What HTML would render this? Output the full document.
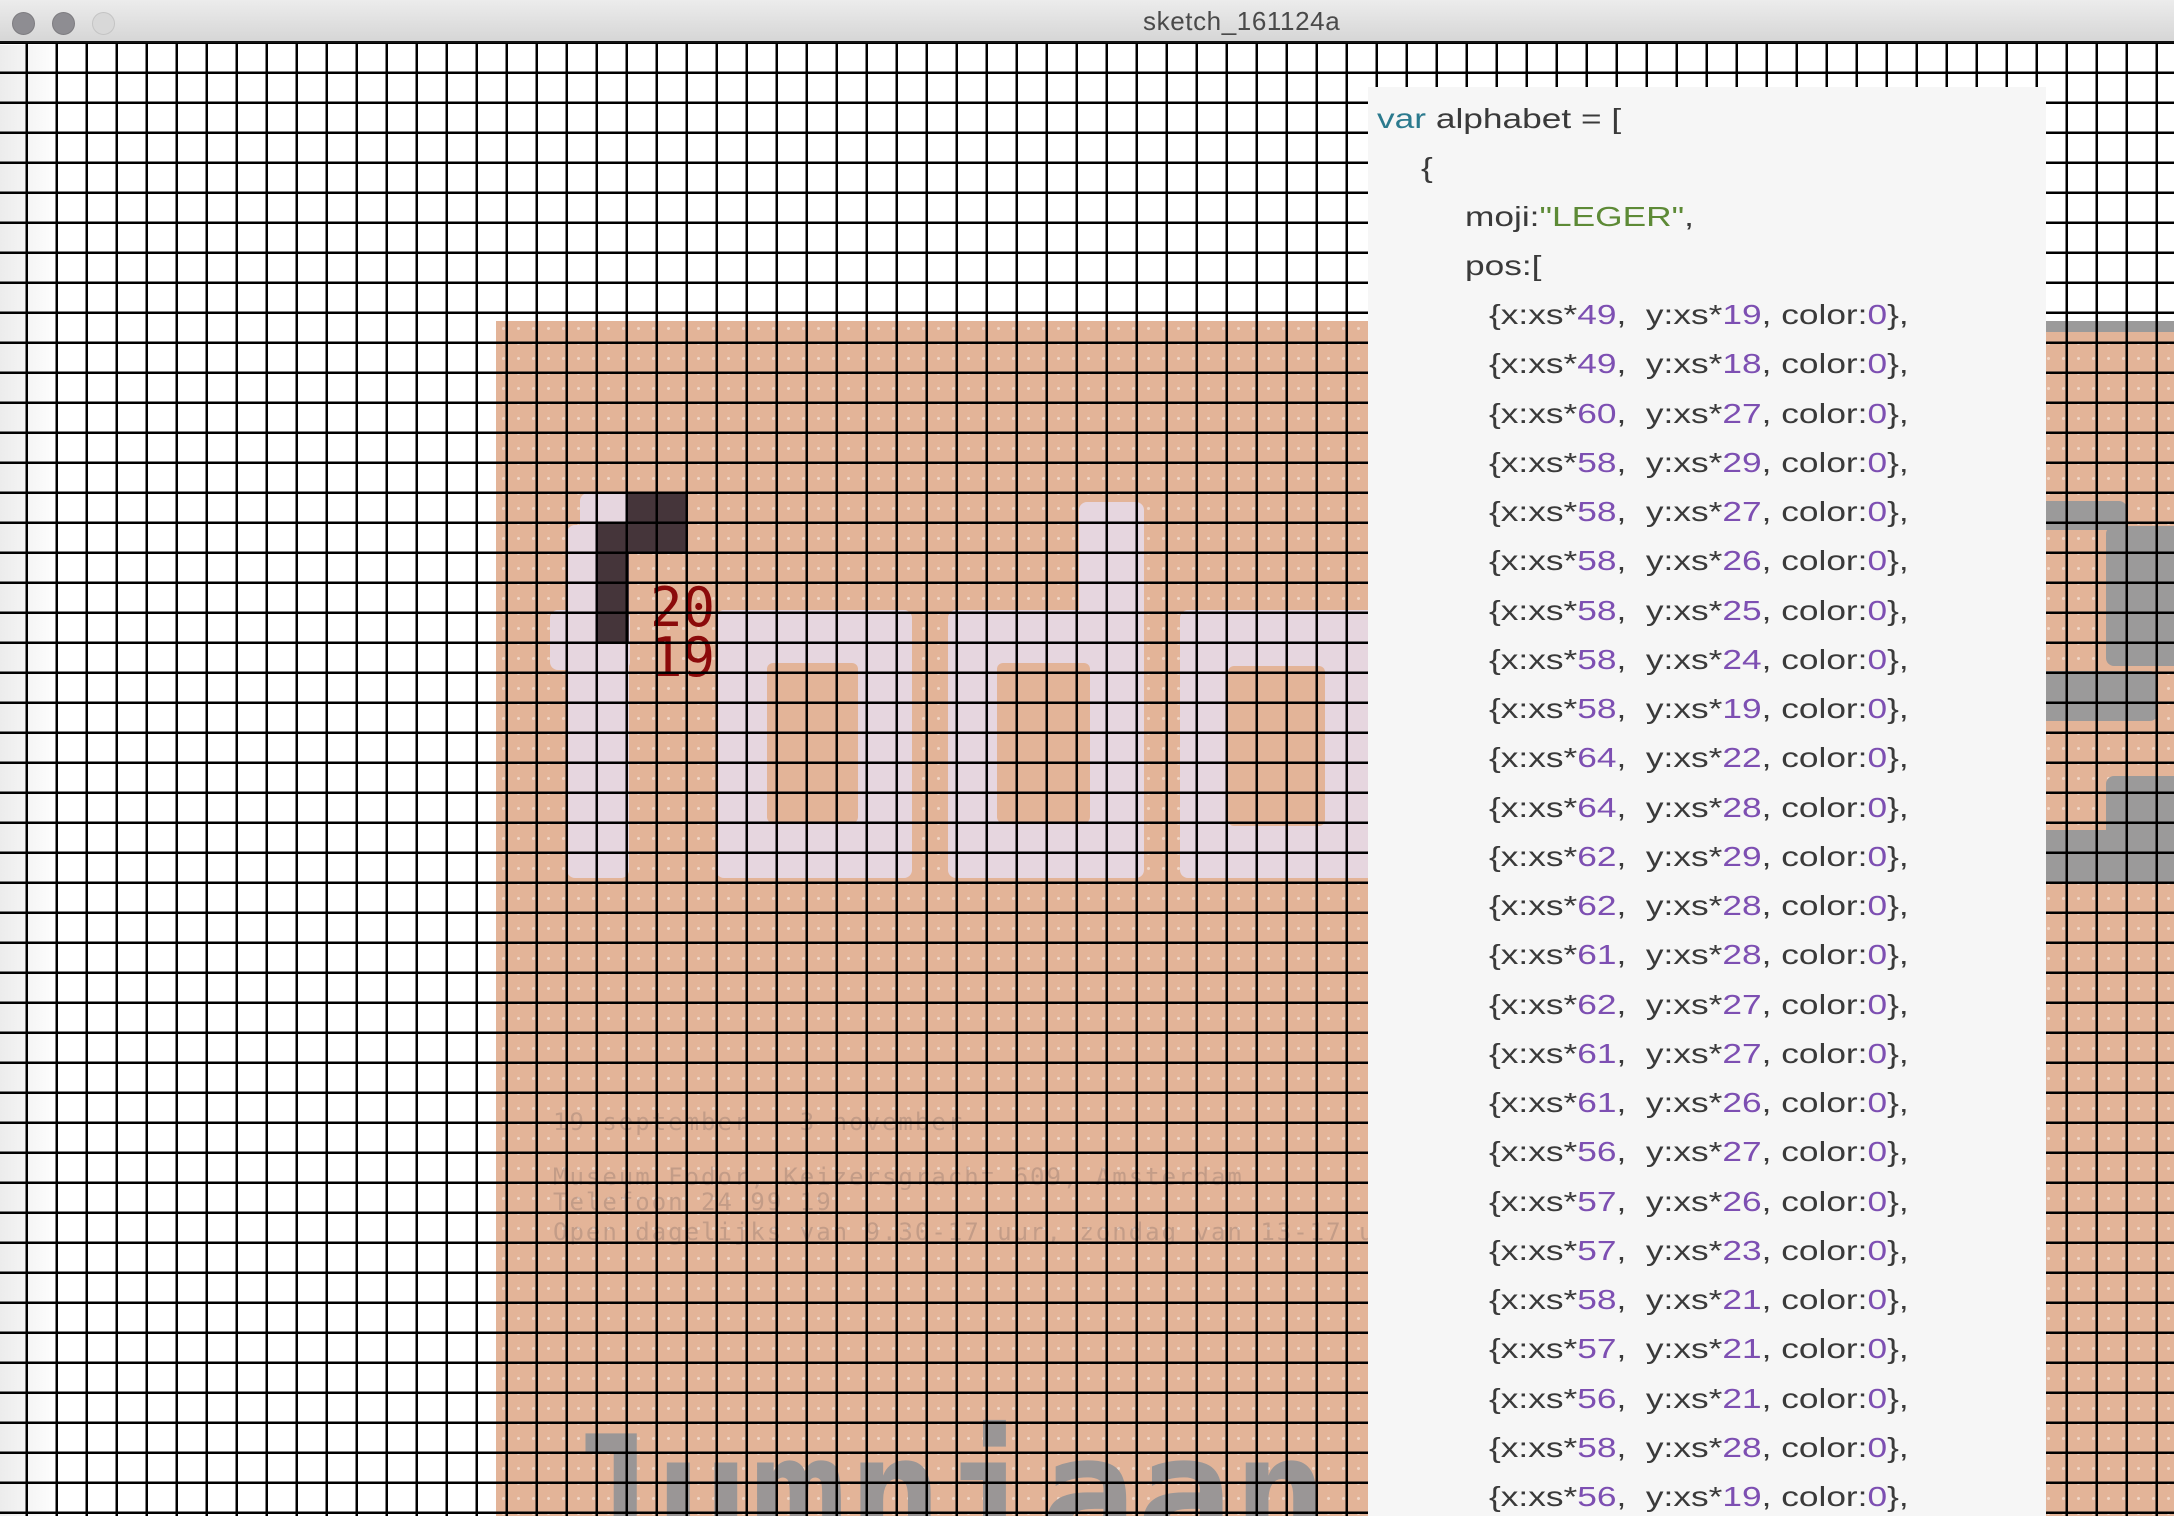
<!DOCTYPE html>
<html><head><meta charset="utf-8"><style>
*{margin:0;padding:0;box-sizing:border-box}
body{width:2174px;height:1516px;overflow:hidden;background:#fff;position:relative;font-family:"Liberation Sans",sans-serif}
.title{position:absolute;left:0;top:0;width:2174px;height:43px;background:linear-gradient(#ececec,#d6d6d6);border-bottom:2px solid #111}
.dot{position:absolute;top:12px;width:23px;height:23px;border-radius:50%;background:#8e8d92;border:1px solid #7d7c80}
.title span{position:absolute;left:1143px;top:6px;font-size:26px;color:#4a4a4a;letter-spacing:0.6px}
.strip{position:absolute;left:0;top:45px;width:60px;height:1471px;background:linear-gradient(to right,#ececec,rgba(255,255,255,0))}
.poster{position:absolute;left:496px;top:321px;width:1678px;height:1195px;background-color:#e3b498;overflow:hidden;
background-image:radial-gradient(circle,rgba(255,255,255,.45) 1.3px,transparent 1.8px);background-size:15px 15px}
.p{position:absolute}
.lav{background:#e6d6df;border-radius:8px}
.or{background:#e3b498;border-radius:6px}
.gr{position:absolute;background:#9b9a9a}
.grid{position:absolute;left:0;top:43px;width:2174px;height:1473px;
background-image:linear-gradient(to right,#000 2.4px,transparent 2.4px),linear-gradient(to bottom,#000 2.4px,transparent 2.4px);
background-size:30px 30px;background-position:25.5px 28.5px}
.panel{position:absolute;left:1368px;top:87px;width:678px;height:1429px;background:#f6f6f6}
.l{position:absolute;font-size:28px;line-height:49px;color:#3a3a3a;white-space:pre;transform:scaleX(1.26);transform-origin:left center}
.k{color:#2b7a8e}.s{color:#5d8a36}.n{color:#7d4fb2}
.small{position:absolute;font-family:"DejaVu Sans Mono","Liberation Mono",monospace;font-size:24px;color:rgba(110,95,95,.28);white-space:pre;letter-spacing:2px}
</style></head><body>
<div class="title"><div class="dot" style="left:12px"></div><div class="dot" style="left:52px"></div><div class="dot" style="left:92px;background:#d8d8d8;border-color:#c4c4c4"></div><span>sketch_161124a</span></div>
<div class="strip"></div>
<div class="poster">
  <div class="p lav" style="left:71px;top:204px;width:62px;height:353px"></div>
  <div class="p lav" style="left:54px;top:289px;width:80px;height:60px"></div>
  <div class="p lav" style="left:84px;top:172px;width:108px;height:60px"></div>
  <div class="p lav" style="left:220px;top:289px;width:196px;height:268px"></div>
  <div class="p or" style="left:271px;top:342px;width:91px;height:160px"></div>
  <div class="p lav" style="left:452px;top:289px;width:196px;height:268px"></div>
  <div class="p lav" style="left:583px;top:181px;width:65px;height:140px"></div>
  <div class="p or" style="left:501px;top:342px;width:93px;height:160px"></div>
  <div class="p lav" style="left:684px;top:289px;width:196px;height:268px"></div>
  <div class="p or" style="left:732px;top:345px;width:97px;height:160px"></div>
  <div class="p" style="left:131px;top:172px;width:61px;height:59px;background:#45353a"></div>
  <div class="p" style="left:102px;top:202px;width:31px;height:120px;background:#45353a"></div>
  <div class="p" style="left:154px;top:262px;font-family:'DejaVu Sans Mono',monospace;font-size:54px;line-height:50px;color:#8b0a0a">20<br>19</div>
  <div class="small" style="left:57px;top:787px">19 september - 3 november</div>
  <div class="small" style="left:57px;top:842px">Museum Fodor, Keizersgracht 609, Amsterdam</div>
  <div class="small" style="left:57px;top:867px">Telefoon 24 99 19</div>
  <div class="small" style="left:57px;top:897px">Open dagelijks van 9.30-17 uur, zondag van 13-17 uur</div>
  <div class="p" style="left:62px;top:1094px;font-family:'DejaVu Sans Mono',monospace;font-weight:bold;font-size:160px;line-height:160px;color:#9a9696;white-space:pre">Jumniaan</div>
  <div class="gr" style="left:1550px;top:0;width:128px;height:11px"></div>
  <div class="gr" style="left:1550px;top:180px;width:81px;height:29px;border-radius:0 8px 8px 0"></div>
  <div class="gr" style="left:1610px;top:205px;width:68px;height:140px;border-radius:8px 0 0 8px"></div>
  <div class="gr" style="left:1550px;top:350px;width:112px;height:50px;border-radius:0 8px 8px 0"></div>
  <div class="gr" style="left:1610px;top:455px;width:68px;height:60px;border-radius:8px 0 0 0"></div>
  <div class="gr" style="left:1550px;top:509px;width:128px;height:53px"></div>
</div>
<div class="grid"></div>
<div class="panel"></div>
<div class="l" style="left:1377px;top:94px"><span class="k">var</span> alphabet = [</div>
<div class="l" style="left:1421px;top:143px">{</div>
<div class="l" style="left:1465px;top:192px">moji:<span class="s">"LEGER"</span>,</div>
<div class="l" style="left:1465px;top:241px">pos:[</div>
<div class="l" style="left:1489px;top:290px">{x:xs*<span class="n">49</span>,  y:xs*<span class="n">19</span>, color:<span class="n">0</span>},</div>
<div class="l" style="left:1489px;top:339px">{x:xs*<span class="n">49</span>,  y:xs*<span class="n">18</span>, color:<span class="n">0</span>},</div>
<div class="l" style="left:1489px;top:389px">{x:xs*<span class="n">60</span>,  y:xs*<span class="n">27</span>, color:<span class="n">0</span>},</div>
<div class="l" style="left:1489px;top:438px">{x:xs*<span class="n">58</span>,  y:xs*<span class="n">29</span>, color:<span class="n">0</span>},</div>
<div class="l" style="left:1489px;top:487px">{x:xs*<span class="n">58</span>,  y:xs*<span class="n">27</span>, color:<span class="n">0</span>},</div>
<div class="l" style="left:1489px;top:536px">{x:xs*<span class="n">58</span>,  y:xs*<span class="n">26</span>, color:<span class="n">0</span>},</div>
<div class="l" style="left:1489px;top:586px">{x:xs*<span class="n">58</span>,  y:xs*<span class="n">25</span>, color:<span class="n">0</span>},</div>
<div class="l" style="left:1489px;top:635px">{x:xs*<span class="n">58</span>,  y:xs*<span class="n">24</span>, color:<span class="n">0</span>},</div>
<div class="l" style="left:1489px;top:684px">{x:xs*<span class="n">58</span>,  y:xs*<span class="n">19</span>, color:<span class="n">0</span>},</div>
<div class="l" style="left:1489px;top:733px">{x:xs*<span class="n">64</span>,  y:xs*<span class="n">22</span>, color:<span class="n">0</span>},</div>
<div class="l" style="left:1489px;top:783px">{x:xs*<span class="n">64</span>,  y:xs*<span class="n">28</span>, color:<span class="n">0</span>},</div>
<div class="l" style="left:1489px;top:832px">{x:xs*<span class="n">62</span>,  y:xs*<span class="n">29</span>, color:<span class="n">0</span>},</div>
<div class="l" style="left:1489px;top:881px">{x:xs*<span class="n">62</span>,  y:xs*<span class="n">28</span>, color:<span class="n">0</span>},</div>
<div class="l" style="left:1489px;top:930px">{x:xs*<span class="n">61</span>,  y:xs*<span class="n">28</span>, color:<span class="n">0</span>},</div>
<div class="l" style="left:1489px;top:980px">{x:xs*<span class="n">62</span>,  y:xs*<span class="n">27</span>, color:<span class="n">0</span>},</div>
<div class="l" style="left:1489px;top:1029px">{x:xs*<span class="n">61</span>,  y:xs*<span class="n">27</span>, color:<span class="n">0</span>},</div>
<div class="l" style="left:1489px;top:1078px">{x:xs*<span class="n">61</span>,  y:xs*<span class="n">26</span>, color:<span class="n">0</span>},</div>
<div class="l" style="left:1489px;top:1127px">{x:xs*<span class="n">56</span>,  y:xs*<span class="n">27</span>, color:<span class="n">0</span>},</div>
<div class="l" style="left:1489px;top:1177px">{x:xs*<span class="n">57</span>,  y:xs*<span class="n">26</span>, color:<span class="n">0</span>},</div>
<div class="l" style="left:1489px;top:1226px">{x:xs*<span class="n">57</span>,  y:xs*<span class="n">23</span>, color:<span class="n">0</span>},</div>
<div class="l" style="left:1489px;top:1275px">{x:xs*<span class="n">58</span>,  y:xs*<span class="n">21</span>, color:<span class="n">0</span>},</div>
<div class="l" style="left:1489px;top:1324px">{x:xs*<span class="n">57</span>,  y:xs*<span class="n">21</span>, color:<span class="n">0</span>},</div>
<div class="l" style="left:1489px;top:1374px">{x:xs*<span class="n">56</span>,  y:xs*<span class="n">21</span>, color:<span class="n">0</span>},</div>
<div class="l" style="left:1489px;top:1423px">{x:xs*<span class="n">58</span>,  y:xs*<span class="n">28</span>, color:<span class="n">0</span>},</div>
<div class="l" style="left:1489px;top:1472px">{x:xs*<span class="n">56</span>,  y:xs*<span class="n">19</span>, color:<span class="n">0</span>},</div>
</body></html>
